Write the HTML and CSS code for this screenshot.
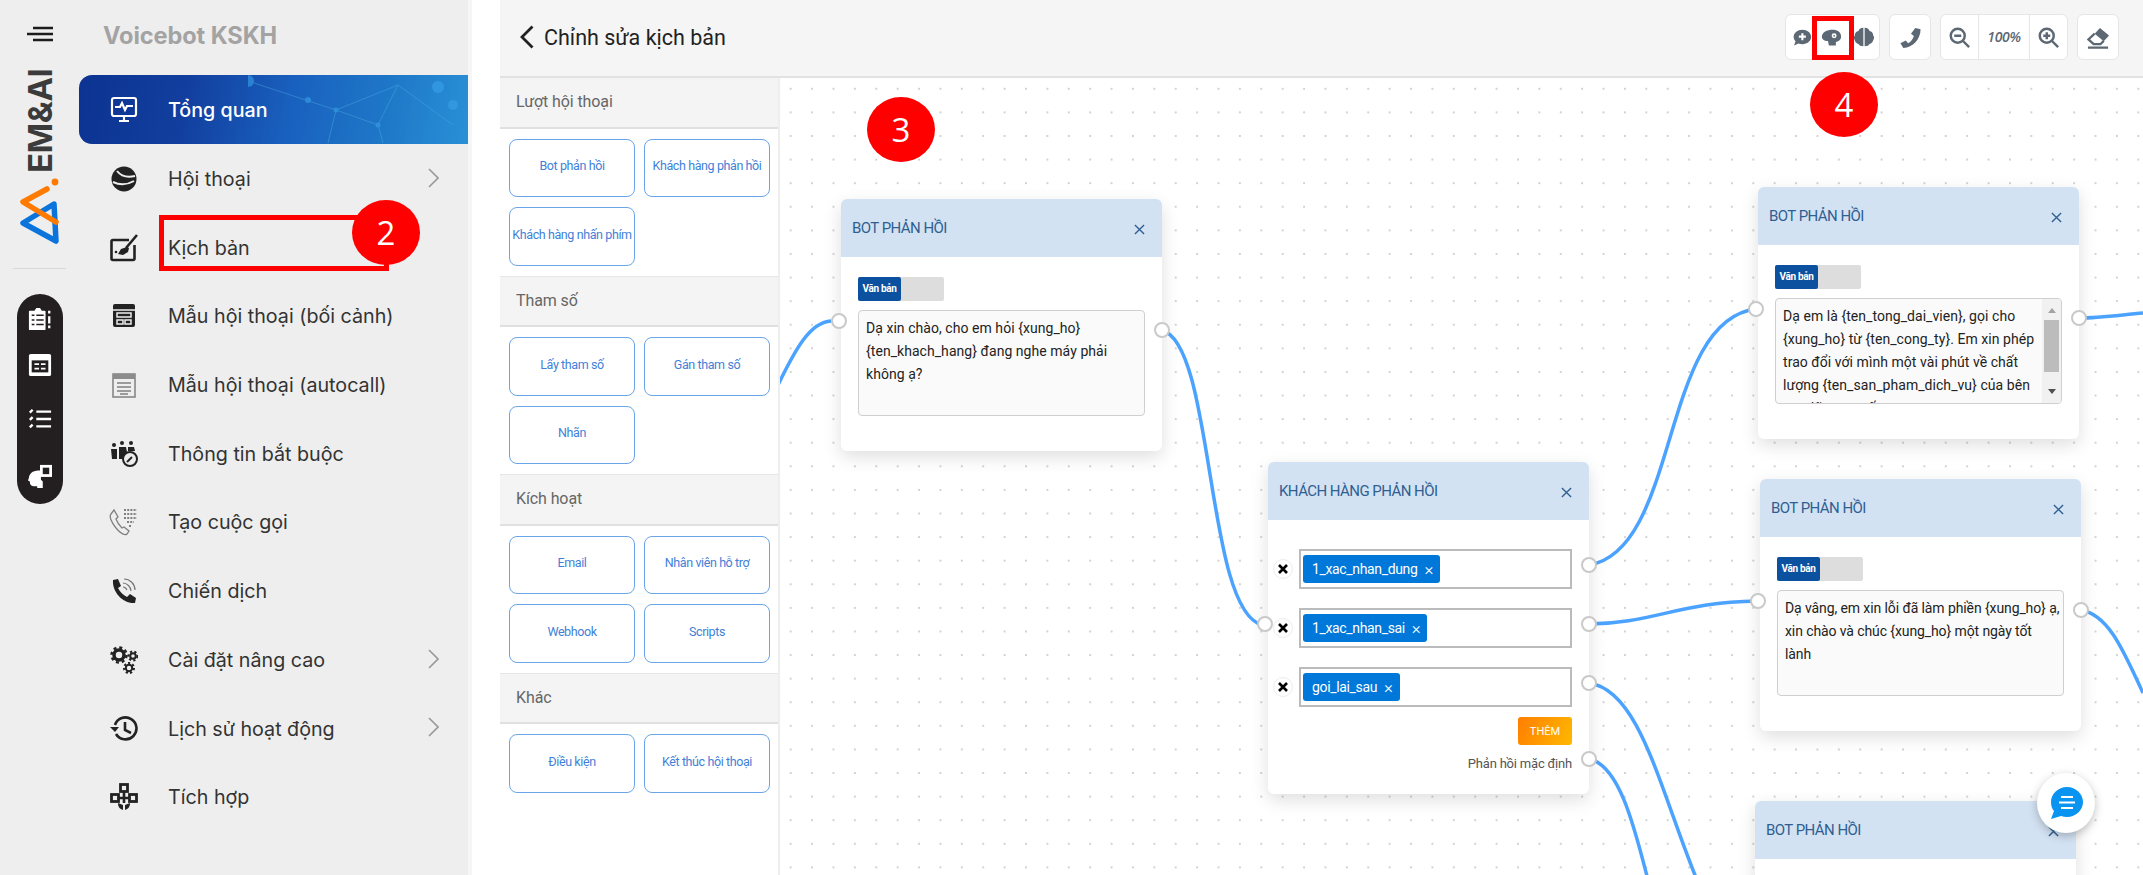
FILE: index.html
```html
<!DOCTYPE html>
<html lang="vi">
<head>
<meta charset="utf-8">
<title>Chỉnh sửa kịch bản</title>
<link rel="stylesheet" href="styles.css">
</head>
<body>
<div class="app">
  <aside class="sidebar">
    <div class="rail">
      <svg class="burger" viewBox="0 0 26 16"><path d="M6 2h20M0 8h26M6 14h20"/></svg>
      <div class="brand">EM&amp;AI</div>
      <svg class="mark" viewBox="0 0 44 68">
        <path class="mark-blue" d="M36 28 5 47l33 18z"/>
        <path class="mark-orange" d="M29 13 5 26l33 20"/>
        <circle class="mark-dot" cx="37" cy="6" r="3.4"/>
      </svg>
      <div class="rail-line"></div>
      <div class="pill">
        <svg class="pill-icon" viewBox="0 0 26 26"><path class="w" d="M2 4h5l2-3h4l2 3h3a1 1 0 0 1 1 1v19a1 1 0 0 1-1 1H2a1 1 0 0 1-1-1V5a1 1 0 0 1 1-1z"/><path class="k" d="M4 9h3M9 9h8M4 14h3M9 14h8M4 19h3M9 19h8"/><path class="ws" d="M23 4v3M23 10v8M23 20v3"/></svg>
        <svg class="pill-icon" viewBox="0 0 26 26"><rect class="w" x="1" y="1" width="24" height="24" rx="2"/><rect class="kf" x="4" y="8" width="18" height="13"/><path class="ws2" d="M7 12h5M14 12h5M7 17h5M14 17h5"/></svg>
        <svg class="pill-icon" viewBox="0 0 26 26"><path class="ws3" d="M9 5h16M9 13h16M9 21h16M2 6l3-3M2 14l3-3M2 22l3-3"/></svg>
        <svg class="pill-icon" viewBox="0 0 26 26"><path class="w" d="M11 7C5 7 1 11 1 15l-1 3 2 1c0 3 1 5 4 5h4v2h6v-7l-2-2V7z"/><rect class="w" x="13" y="1" width="13" height="13"/><rect class="kf" x="16" y="4" width="7" height="7"/></svg>
      </div>
    </div>
    <nav class="menu">
      <div class="menu-title">Voicebot KSKH</div>
      <a class="item active">
        <svg class="net" viewBox="0 0 220 68"><path d="M0 6 88 35 150 10 205 50M88 35 80 68M88 35 130 50 150 10M130 50 135 68"/><circle cx="0" cy="6" r="6"/><circle cx="60" cy="25" r="3"/><circle cx="88" cy="35" r="2.500"/><circle cx="190" cy="12" r="6"/><circle cx="130" cy="50" r="2.500"/><circle cx="205" cy="30" r="5"/></svg>
        <svg class="ic" viewBox="0 0 28 28"><rect class="s-w" x="2" y="2" width="24" height="18" rx="2"/><path class="s-w" d="M5 11h5l2-4 3 7 2-4h6M14 20v4M9 25h10"/></svg>
        <span>Tổng quan</span>
      </a>
      <a class="item">
        <svg class="ic" viewBox="0 0 28 28"><circle class="f-k" cx="14" cy="14" r="12.5"/><path class="s-l" d="M7 6c4 5 10 7 18 5M3 17c6 3 14 3 21-1"/></svg>
        <span>Hội thoại</span>
        <svg class="chev" viewBox="0 0 11 20"><path d="M1 1l9 9-9 9"/></svg>
      </a>
      <a class="item">
        <svg class="ic" viewBox="0 0 28 28"><path class="s-k" d="M19 6H3a1.500 1.500 0 0 0-1.500 1.500v17A1.500 1.500 0 0 0 3 26h20a1.500 1.500 0 0 0 1.500-1.500V11"/><path class="s-k" d="M27 1 16 14"/><path class="f-k" d="M17 13l-6 2-3 5 5 1 5-3 1-4z"/><circle class="f-k" cx="6" cy="18" r="1.300"/></svg>
        <span>Kịch bản</span>
      </a>
      <a class="item">
        <svg class="ic" viewBox="0 0 28 28"><rect class="f-k" x="3" y="2" width="22" height="23" rx="2"/><path class="s-l1" d="M3 8h22"/><rect class="s-l1" x="7" y="11" width="14" height="4"/><rect class="s-l1" x="7" y="18" width="6" height="4"/><rect class="s-l1" x="15" y="18" width="6" height="4"/></svg>
        <span>Mẫu hội thoại (bối cảnh)</span>
      </a>
      <a class="item">
        <svg class="ic" viewBox="0 0 28 28"><rect class="s-g" x="3" y="3" width="22" height="23"/><path class="f-g" d="M3 3h22v5H3z"/><path class="s-g" d="M7 12h14M7 16h14M7 20h14M10 23h8"/></svg>
        <span>Mẫu hội thoại (autocall)</span>
      </a>
      <a class="item">
        <svg class="ic" viewBox="0 0 28 28"><circle class="f-k" cx="4" cy="5" r="2"/><circle class="f-k" cx="12" cy="3" r="2"/><circle class="f-k" cx="21" cy="3" r="2"/><path class="f-k" d="M1 9h6v10H2zM9 7h7l1 5-4 7H9zM18 7h6l1 4h-7z"/><circle class="f-wk" cx="20" cy="19" r="7"/><path class="s-k2" d="M17 22l5-5"/></svg>
        <span>Thông tin bắt buộc</span>
      </a>
      <a class="item">
        <svg class="ic wide" viewBox="0 0 30 28"><path class="s-g1" d="M3 6C1 8 3 14 8 20c4 5 9 8 11 6l2-3-5-4-2 1c-2-2-5-6-6-9l2-2-4-7z"/><path class="s-dots" d="M16 2h13M16 6h13M16 10h13M19 14h7M21 18h3"/></svg>
        <span>Tạo cuộc gọi</span>
      </a>
      <a class="item">
        <svg class="ic" viewBox="0 0 28 28"><path class="f-k" d="M3 3l5-1 3 7-3 2c2 4 5 7 9 9l3-3 6 4-1 5C13 27 2 15 3 3z"/><path class="s-g2" d="M13 6c4 0 8 4 8 8M14 2c6 0 11 5 11 11M13 10c2 0 3 1 4 3"/></svg>
        <span>Chiến dịch</span>
      </a>
      <a class="item">
        <svg class="ic" viewBox="0 0 28 28"><circle class="g-r" cx="9" cy="9" r="5"/><circle class="g-t" cx="9" cy="9" r="7.500"/><circle class="g-r2" cx="23" cy="10" r="2.800"/><circle class="g-t2" cx="23" cy="10" r="4.500"/><circle class="g-r2" cx="19" cy="22" r="3.200"/><circle class="g-t2" cx="19" cy="22" r="5"/></svg>
        <span>Cài đặt nâng cao</span>
        <svg class="chev" viewBox="0 0 11 20"><path d="M1 1l9 9-9 9"/></svg>
      </a>
      <a class="item">
        <svg class="ic" viewBox="0 0 28 28"><path class="s-k" d="M5 10a11 11 0 1 1 1 9"/><path class="f-k" d="M0 12h9l-4 5z"/><path class="s-k" d="M15 7v8l6 3"/></svg>
        <span>Lịch sử hoạt động</span>
        <svg class="chev" viewBox="0 0 11 20"><path d="M1 1l9 9-9 9"/></svg>
      </a>
      <a class="item">
        <svg class="ic" viewBox="0 0 28 28"><rect class="s-box" x="10.500" y="1.500" width="7" height="7"/><rect class="s-box" x="1.500" y="11.500" width="7" height="7"/><rect class="s-box" x="19.500" y="11.500" width="7" height="7"/><path class="s-k" d="M14 8v12M8 15h12"/><path class="f-k" d="M8 20l5 2v5c-3-1-5-3-5-7zM20 20l-5 2v5c3-1 5-3 5-7z"/></svg>
        <span>Tích hợp</span>
      </a>
    </nav>
  </aside>

  <main class="main">
    <header class="topbar">
      <svg class="back" viewBox="0 0 14 24"><path d="M12.500 1.500 2 12l10.500 10.500"/></svg>
      <h1 class="page-title">Chỉnh sửa kịch bản</h1>
      <div class="tools">
        <div class="tool-group">
          <button class="tool"><svg viewBox="0 0 24 24"><path class="t-f" d="M13 3C7.500 3 3 6.600 3 11.200c0 2 .8 3.800 2.200 5.200L3.500 21l5-2.100c1.300.5 2.800.8 4.500.8 5.500 0 10-3.700 10-8.500S18.500 3 13 3z"/><path class="t-w" d="M13 7v8M9 11h8"/></svg></button>
          <button class="tool"><svg viewBox="0 0 24 24"><path class="t-f" d="M13 3C7 3 1 6 1 11c0 3 3 5 7 5l1 5h8v-4c4-1 6-3 6-6 0-5-4-8-10-8z"/><circle class="t-gear" cx="15" cy="10" r="2.800"/><circle class="t-gear-in" cx="15" cy="10" r="1"/></svg></button>
          <button class="tool brain"><svg viewBox="0 0 24 24"><path class="t-f" d="M11.300 2C8 2 6.500 3.500 6 5.500 3.500 6 2 8 2 10c-1.300 1.500-1.300 4 0 5.500.3 2 1.800 3.500 4 4 .7 1.500 2.800 2.500 5.300 2.500zM12.700 2C16 2 17.500 3.500 18 5.500 20.500 6 22 8 22 10c1.300 1.500 1.300 4 0 5.500-.3 2-1.800 3.500-4 4-.7 1.500-2.800 2.500-5.300 2.500z"/></svg></button>
        </div>
        <div class="tool-group">
          <button class="tool wide"><svg viewBox="0 0 24 24"><path class="t-f" d="M17 2l5.500 1.500c0 10.500-8 19-18 19.500L1.500 18l5.500-3 2.500 3c3-1.500 5-4 6-7.500L12.500 8z"/></svg></button>
        </div>
        <div class="tool-group">
          <button class="tool zoomb"><svg viewBox="0 0 24 24"><circle class="t-s" cx="10" cy="10" r="8"/><path class="t-s" d="M6 10h8M16 16l7 7"/></svg></button>
          <span class="zoom-val">100%</span>
          <button class="tool zoomb"><svg viewBox="0 0 24 24"><circle class="t-s" cx="10" cy="10" r="8"/><path class="t-s" d="M6 10h8M10 6v8M16 16l7 7"/></svg></button>
        </div>
        <div class="tool-group">
          <button class="tool wide"><svg viewBox="0 0 24 24"><path class="t-f" d="M13.500 2 23 10l-5.500 6L8 8z"/><path class="t-e" d="M8 8 1.500 14 7 19h7l3.500-3.500M1 22.500h21"/></svg></button>
        </div>
      </div>
    </header>

    <div class="workspace">
      <section class="palette">
        <h2 class="pal-head">Lượt hội thoại</h2>
        <div class="pal-grid">
          <button class="pal-btn">Bot phản hồi</button>
          <button class="pal-btn">Khách hàng phản hồi</button>
          <button class="pal-btn">Khách hàng nhấn phím</button>
        </div>
        <h2 class="pal-head">Tham số</h2>
        <div class="pal-grid">
          <button class="pal-btn">Lấy tham số</button>
          <button class="pal-btn">Gán tham số</button>
          <button class="pal-btn">Nhãn</button>
        </div>
        <h2 class="pal-head">Kích hoạt</h2>
        <div class="pal-grid">
          <button class="pal-btn">Email</button>
          <button class="pal-btn">Nhân viên hỗ trợ</button>
          <button class="pal-btn">Webhook</button>
          <button class="pal-btn">Scripts</button>
        </div>
        <h2 class="pal-head">Khác</h2>
        <div class="pal-grid">
          <button class="pal-btn">Điều kiện</button>
          <button class="pal-btn">Kết thúc hội thoại</button>
        </div>
      </section>

      <section class="canvas">
        <svg class="wires" width="1364" height="797" viewBox="779 78 1364 797">
          <path d="M778 385C795 350 810 322 831 321"/>
          <path d="M1162 330C1215 345 1205 610 1262 625"/>
          <path d="M1589 565C1680 550 1660 320 1756 309"/>
          <path d="M1589 624C1650 624 1680 602 1757 601"/>
          <path d="M1589 683C1640 690 1660 790 1697 880"/>
          <path d="M1589 759C1620 765 1635 830 1648 880"/>
          <path d="M2079 318C2100 318 2120 315 2143 313"/>
          <path d="M2081 610C2110 615 2125 655 2143 693"/>
        </svg>

        <article class="node bot n1">
          <span class="port in"></span><span class="port out"></span>
          <div class="node-head"><span>BOT PHẢN HỒI</span><svg class="close" viewBox="0 0 12 12"><path d="M1 1l10 10M11 1 1 11"/></svg></div>
          <div class="node-body">
            <div class="toggle"><span class="toggle-on">Văn bản</span></div>
            <div class="msg"><div class="msg-text">Dạ xin chào, cho em hỏi {xung_ho} {ten_khach_hang} đang nghe máy phải không ạ?</div></div>
          </div>
        </article>

        <article class="node bot n2">
          <span class="port in"></span><span class="port out"></span>
          <div class="node-head"><span>BOT PHẢN HỒI</span><svg class="close" viewBox="0 0 12 12"><path d="M1 1l10 10M11 1 1 11"/></svg></div>
          <div class="node-body">
            <div class="toggle"><span class="toggle-on">Văn bản</span></div>
            <div class="msg"><div class="msg-text">Dạ em là {ten_tong_dai_vien}, gọi cho {xung_ho} từ {ten_cong_ty}. Em xin phép trao đổi với mình một vài phút về chất lượng {ten_san_pham_dich_vu} của bên em đã cung cấp ạ.</div>
              <div class="scroll"><i class="arrow-up"></i><b class="thumb"></b><i class="arrow-down"></i></div>
            </div>
          </div>
        </article>

        <article class="node bot n3">
          <span class="port in"></span><span class="port out"></span>
          <div class="node-head"><span>BOT PHẢN HỒI</span><svg class="close" viewBox="0 0 12 12"><path d="M1 1l10 10M11 1 1 11"/></svg></div>
          <div class="node-body">
            <div class="toggle"><span class="toggle-on">Văn bản</span></div>
            <div class="msg"><div class="msg-text tight">Dạ vâng, em xin lỗi đã làm phiền {xung_ho} ạ,<br>xin chào và chúc {xung_ho} một ngày tốt<br>lành</div></div>
          </div>
        </article>

        <article class="node bot n4">
          <div class="node-head"><span>BOT PHẢN HỒI</span><svg class="close" viewBox="0 0 12 12"><path d="M1 1l10 10M11 1 1 11"/></svg></div>
        </article>

        <article class="node kh">
          <span class="port in kh-in"></span>
          <span class="port out p1"></span><span class="port out p2"></span><span class="port out p3"></span><span class="port out p4"></span>
          <div class="node-head"><span>KHÁCH HÀNG PHẢN HỒI</span><svg class="close" viewBox="0 0 12 12"><path d="M1 1l10 10M11 1 1 11"/></svg></div>
          <div class="kh-body">
            <div class="kh-row">
              <span class="del"><svg viewBox="0 0 10 10"><path d="M1 1l8 8M9 1 1 9"/></svg></span>
              <div class="tag-input"><span class="tag">1_xac_nhan_dung<em>×</em></span></div>
            </div>
            <div class="kh-row">
              <span class="del"><svg viewBox="0 0 10 10"><path d="M1 1l8 8M9 1 1 9"/></svg></span>
              <div class="tag-input"><span class="tag">1_xac_nhan_sai<em>×</em></span></div>
            </div>
            <div class="kh-row">
              <span class="del"><svg viewBox="0 0 10 10"><path d="M1 1l8 8M9 1 1 9"/></svg></span>
              <div class="tag-input"><span class="tag">goi_lai_sau<em>×</em></span></div>
            </div>
            <button class="add">THÊM</button>
            <div class="default-reply">Phản hồi mặc định</div>
          </div>
        </article>

        <button class="chat"><svg viewBox="0 0 34 34"><path class="chat-b" d="M18 1C9 1 2 8 2 16c0 4 1 7 3 9l-3 8 10-3c2 .6 4 1 6 1 9 0 16-7 16-15S27 1 18 1z"/><path class="chat-l" d="M12 11h12M10 16.500h16M12 22h12"/></svg></button>
      </section>
    </div>
  </main>
</div>

<div class="mark-box box-2"></div>
<div class="mark-box box-4"></div>
<div class="badge b2">2</div>
<div class="badge b3">3</div>
<div class="badge b4">4</div>
</body>
</html>
```
FILE: styles.css
```css
* { box-sizing: border-box; }
html, body { margin: 0; padding: 0; height: 875px; overflow: hidden; background: #fff; }
body { position: relative; font-family: Roboto, "Liberation Sans", sans-serif; }
button { font: inherit; cursor: pointer; }
h1, h2 { margin: 0; font-weight: 400; }

.app { display: flex; width: 2143px; height: 875px; }

/* Sidebar */
.sidebar { display: flex; width: 472px; height: 875px; background: #eee; border-right: 4px solid #f6f6f6; flex: none; }
.rail { width: 79px; display: flex; flex-direction: column; align-items: center; padding-top: 26px; flex: none; }
.burger { width: 26px; height: 16px; fill: none; stroke: #1c1c1c; stroke-width: 2.4; }
.brand { writing-mode: vertical-rl; transform: rotate(180deg); font: 700 33px/26px Inter, "Liberation Sans", sans-serif; color: #3b3b3b; height: 102px; width: 26px; margin-top: 29px; letter-spacing: -.5px; text-align: left; white-space: nowrap; }
.mark { width: 44px; height: 68px; margin-top: 3px; margin-left: 0; fill: none; }
.mark-blue { stroke: #0b74dc; stroke-width: 5.500; stroke-linejoin: round; }
.mark-orange { stroke: #ff7a00; stroke-width: 5.500; stroke-linecap: round; stroke-linejoin: round; }
.mark-dot { fill: #ff7a00; }
.rail-line { width: 53px; height: 1px; background: #d8d8d8; margin-top: 24px; }
.pill { width: 46px; height: 210px; border-radius: 23px; background: #231f20; margin-top: 25px; display: flex; flex-direction: column; align-items: center; padding-top: 13px; }
.pill-icon { width: 24px; height: 24px; flex: none; }
.pill-icon:nth-child(2) { margin-top: 22px; }
.pill-icon:nth-child(3) { margin-top: 30px; }
.pill-icon:nth-child(4) { margin-top: 33px; }
.w { fill: #fff; }
.k { stroke: #231f20; stroke-width: 1.600; fill: none; }
.kf { fill: #231f20; }
.ws { stroke: #fff; stroke-width: 2.500; fill: none; }
.ws2 { stroke: #fff; stroke-width: 1.800; fill: none; }
.ws3 { stroke: #fff; stroke-width: 2.600; fill: none; }

.menu { flex: 1; display: flex; flex-direction: column; min-width: 0; }
.menu-title { height: 75px; padding: 20px 0 0 24px; font: 700 23.600px/32px Inter, "Liberation Sans", sans-serif; color: #a3a3a3; letter-spacing: -.1px; }
.item { position: relative; height: 68.700px; display: flex; align-items: center; padding: 2px 0 0 31px; color: #333; font: 400 19.700px/28px Inter, "Liberation Sans", sans-serif; flex: none; }
.item > span { margin-left: 30px; position: relative; }
.ic { width: 28px; height: 28px; flex: none; position: relative; }
.item.active { background: linear-gradient(100deg, #0c3391 0%, #123f9f 28%, #1a62bf 55%, #1f78c8 78%, #2a90d6 100%); border-radius: 13px 0 0 13px; color: #fff; font-weight: 500; overflow: hidden; }
.net { position: absolute; right: 0; top: 0; width: 220px; height: 68px; fill: #3aa2e8; opacity: .6; }
.net path { fill: none; stroke: #4aa6e0; stroke-width: .8; }
.chev { width: 11px; height: 20px; position: absolute; right: 29px; top: 24px; fill: none; stroke: #999; stroke-width: 1.600; }
.s-w { fill: none; stroke: #fff; stroke-width: 2.200; }
.s-k { fill: none; stroke: #222; stroke-width: 2.600; }
.s-k2 { fill: none; stroke: #222; stroke-width: 2; }
.s-box { fill: none; stroke: #222; stroke-width: 2.800; }
.f-k { fill: #222; }
.f-wk { fill: #eee; stroke: #222; stroke-width: 2; }
.s-l { fill: none; stroke: #eee; stroke-width: 2; }
.s-l1 { fill: none; stroke: #eee; stroke-width: 1.500; }
.s-g { fill: none; stroke: #808080; stroke-width: 1.500; }
.f-g { fill: #8c8c8c; }
.s-g1 { fill: none; stroke: #808080; stroke-width: 1.300; }
.s-g2 { fill: none; stroke: #777; stroke-width: 1.200; }
.s-dots { fill: none; stroke: #808080; stroke-width: 2.200; stroke-dasharray: 2 1.200; }
.ic.wide { width: 30px; margin-left: -2px; }
.g-r { fill: none; stroke: #222; stroke-width: 3.500; }
.g-t { fill: none; stroke: #222; stroke-width: 2.500; stroke-dasharray: 3 2.900; }
.g-r2 { fill: none; stroke: #222; stroke-width: 2; }
.g-t2 { fill: none; stroke: #222; stroke-width: 2; stroke-dasharray: 2.200 2.200; }

/* Main */
.main { margin-left: 28px; flex: 1; min-width: 0; display: flex; flex-direction: column; height: 875px; }
.topbar { height: 78px; flex: none; background: #f5f5f5; border-bottom: 2px solid #e2e2e2; display: flex; align-items: center; padding: 0 24px 2px 20px; }
.back { width: 14px; height: 24px; fill: none; stroke: #222; stroke-width: 2.800; flex: none; }
.page-title { margin-left: 10px; font-size: 21.500px; color: #222; }
.tools { margin-left: auto; display: flex; gap: 9px; }
.tool-group { height: 46px; display: flex; align-items: center; background: #fff; border: 1px solid #e6e6e6; border-radius: 6px; }
.tool { width: 30px; height: 44px; padding: 0; background: none; border: 0; display: flex; align-items: center; justify-content: center; }
.tool svg { width: 21px; height: 21px; }
.tool.brain { width: 33px; padding-left: 3px; }
.tool.brain svg { width: 22px; height: 22px; }
.tool.wide { width: 40px; }
.tool.wide svg { width: 23px; height: 23px; }
.tool.zoomb { width: 37px; }
.zoom-val { width: 52px; height: 44px; border-left: 1px solid #e3e7ea; border-right: 1px solid #e3e7ea; text-align: center; font: italic 600 14px/44px "Open Sans", sans-serif; letter-spacing: -.3px; color: #5c6873; }
.t-f { fill: #5c6873; }
.t-w { fill: none; stroke: #fff; stroke-width: 2.400; }
.t-gear { fill: #fff; }
.t-gear-in { fill: #5c6873; }
.t-e { fill: none; stroke: #5c6873; stroke-width: 2.400; }
.t-s { fill: none; stroke: #5c6873; stroke-width: 2.800; }

.workspace { flex: 1; display: flex; min-height: 0; }
.palette { width: 280px; flex: none; border-right: 2px solid #eee; background: #fff; }
.pal-head { height: 51.500px; background: #f4f4f4; border-bottom: 2px solid #e0e0e0; border-top: 1px solid #e6e6e6; padding-left: 16px; font-size: 16px; line-height: 48px; letter-spacing: -.1px; color: #666; }
.pal-head:first-child { border-top: 0; height: 50.500px; }
.pal-grid { display: grid; grid-template-columns: 126px 126px; gap: 10px 9px; padding: 10px 9px; }
.pal-btn { height: 58.500px; padding: 0 0 4px; background: #fff; border: 1.500px solid #6aa5e8; border-radius: 8px; color: #3f81d8; font-size: 12.500px; letter-spacing: -.4px; white-space: nowrap; }

/* Canvas */
.canvas { position: relative; flex: 1; min-width: 0; overflow: hidden; background-color: #fff; background-image: radial-gradient(circle, #d2d2d2 1px, transparent 1.400px); background-size: 21.400px 23.600px; background-position: 0 -1px; }
.wires { position: absolute; left: -1px; top: 0; fill: none; stroke: #4ba3ff; stroke-width: 3.500; }
.node { position: absolute; width: 321px; background: #fff; border-radius: 6px; box-shadow: 0 6px 18px rgba(0,0,0,.13); }
.node.bot { height: 252px; }
.n1 { left: 61px; top: 121px; }
.n2 { left: 978px; top: 109px; }
.n3 { left: 980px; top: 401px; }
.n4 { left: 975px; top: 723px; }
.kh { left: 488px; top: 384px; height: 332px; }
.node-head { height: 58px; background: #d3e2f3; border-radius: 6px 6px 0 0; display: flex; align-items: center; justify-content: space-between; padding: 0 17px 0 11px; font-size: 15px; letter-spacing: -.55px; color: #2f5f91; }
.close { width: 11px; height: 11px; fill: none; stroke: #2f5f91; stroke-width: 1.500; margin-top: 2px; }
.node-body { padding: 20px 17px 0; }
.toggle { width: 86px; height: 24px; background: #ddd; border-radius: 2px; margin-bottom: 9px; }
.toggle-on { display: block; width: 43px; height: 24px; background: #0c519f; border-radius: 2px; color: #fff; text-align: center; font-size: 10px; font-weight: 700; line-height: 23px; letter-spacing: -.3px; }
.msg { height: 106px; border: 1px solid #cfcfcf; border-radius: 4px; background: #fafafa; display: flex; overflow: hidden; font-size: 14px; line-height: 23px; color: #222; }
.msg-text { flex: 1; min-width: 0; padding: 6px 6px 0 7px; letter-spacing: .05px; }
.msg-text.tight { padding-right: 0; letter-spacing: -.1px; }
.scroll { width: 19px; flex: none; background: #f1f1f1; display: flex; flex-direction: column; align-items: center; padding-top: 9px; }
.arrow-up { width: 0; height: 0; border: 4px solid transparent; border-top: 0; border-bottom: 5px solid #a3a3a3; }
.thumb { width: 15px; height: 52px; background: #bcbcbc; margin-top: 7px; }
.arrow-down { width: 0; height: 0; border: 4px solid transparent; border-bottom: 0; border-top: 5px solid #505050; margin-top: 17px; }
.port { position: absolute; width: 16px; height: 16px; border-radius: 50%; background: #fff; border: 2px solid #c9c9c9; z-index: 2; }
.port.in { left: -10px; top: 114px; }
.port.out { right: -8px; top: 123px; }
.port.kh-in { left: -11px; top: 154px; }
.port.p1 { top: 95px; }
.port.p2 { top: 154px; }
.port.p3 { top: 213px; }
.port.p4 { top: 289px; }
.kh-body { display: flex; flex-direction: column; padding: 29px 17px 0 5px; }
.kh-row { display: flex; align-items: center; gap: 6px; height: 40px; margin-bottom: 19px; }
.kh-row:nth-child(3) { margin-bottom: 10px; }
.del { width: 20px; height: 20px; border-radius: 50%; border: 1px solid #ededed; background: #fff; display: flex; align-items: center; justify-content: center; flex: none; }
.del svg { width: 10px; height: 10px; fill: none; stroke: #000; stroke-width: 2.600; }
.tag-input { flex: 1; height: 40px; border: 2px solid #bbb; background: #fff; padding: 4px 2px; }
.tag { display: inline-flex; align-items: center; height: 28px; padding: 0 7px 0 9px; background: #0078d9; border-radius: 3px; color: #fff; font-size: 14px; letter-spacing: -.35px; }
.tag em { font-style: normal; font-size: 17px; font-weight: 300; margin-left: 7px; }
.add { align-self: flex-end; width: 54px; height: 28px; padding: 0; border: 0; border-radius: 3px; background: linear-gradient(115deg, #ff7e00, #ffb800); color: #fff; font-size: 11px; }
.default-reply { text-align: right; margin-top: 10px; font-size: 13px; line-height: 18px; letter-spacing: -.2px; color: #555; }
.chat { position: absolute; left: 1257px; top: 695px; width: 58px; height: 60px; padding: 0; border: 0; border-radius: 50%; background: #fff; box-shadow: 0 3px 10px rgba(0,0,0,.25); display: flex; align-items: center; justify-content: center; z-index: 3; }
.chat svg { width: 34px; height: 34px; }
.chat-b { fill: #0a94f2; }
.chat-l { fill: none; stroke: #fff; stroke-width: 1.800; }

/* Annotations laid over the screenshot */
.mark-box { position: absolute; border: 5px solid #f00; }
.box-2 { left: 159px; top: 215px; width: 230px; height: 56px; }
.box-4 { left: 1812px; top: 16px; width: 42px; height: 44px; }
.badge { position: absolute; width: 68px; height: 65px; border-radius: 50%; background: #f00; color: #fff; display: flex; align-items: center; justify-content: center; font: 400 33px/1 "Open Sans", sans-serif; }
.b2 { left: 352px; top: 200px; }
.b3 { left: 867px; top: 97px; }
.b4 { left: 1810px; top: 72px; }
```
